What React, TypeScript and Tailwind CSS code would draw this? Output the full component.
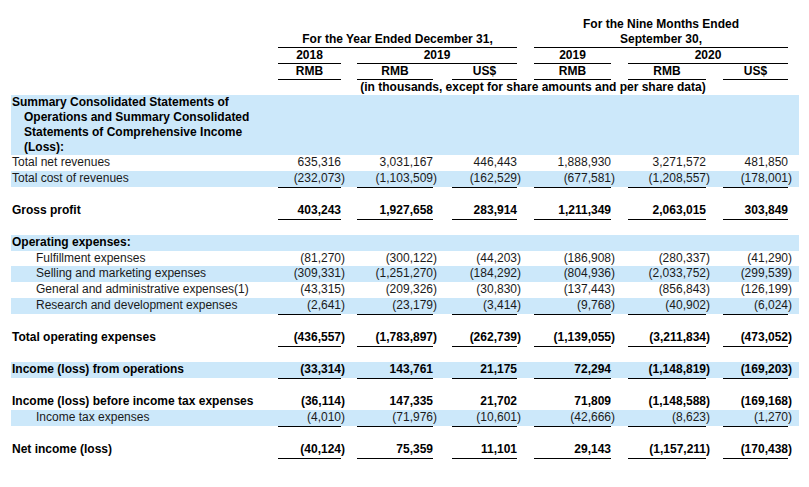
import React from "react";

const GRID =
  "grid grid-cols-[267px_63px_16px_76px_19px_65px_17px_77px_17px_78px_17px_65px_11px]";

type Row = {
  label: string;
  values?: string[];
  bold?: boolean;
  blue?: boolean;
  indent?: boolean;
  underline?: boolean;
  empty?: boolean;
  short?: boolean;
};

const rows: Row[] = [
  { label: "Total net revenues", values: ["635,316", "3,031,167", "446,443", "1,888,930", "3,271,572", "481,850"] },
  { label: "Total cost of revenues", blue: true, underline: true, values: ["(232,073)", "(1,103,509)", "(162,529)", "(677,581)", "(1,208,557)", "(178,001)"] },
  { label: "", empty: true },
  { label: "Gross profit", bold: true, underline: true, values: ["403,243", "1,927,658", "283,914", "1,211,349", "2,063,015", "303,849"] },
  { label: "", empty: true },
  { label: "Operating expenses:", bold: true, blue: true },
  { label: "Fulfillment expenses", indent: true, short: true, values: ["(81,270)", "(300,122)", "(44,203)", "(186,908)", "(280,337)", "(41,290)"] },
  { label: "Selling and marketing expenses", indent: true, blue: true, values: ["(309,331)", "(1,251,270)", "(184,292)", "(804,936)", "(2,033,752)", "(299,539)"] },
  { label: "General and administrative expenses(1)", indent: true, values: ["(43,315)", "(209,326)", "(30,830)", "(137,443)", "(856,843)", "(126,199)"] },
  { label: "Research and development expenses", indent: true, blue: true, underline: true, values: ["(2,641)", "(23,179)", "(3,414)", "(9,768)", "(40,902)", "(6,024)"] },
  { label: "", empty: true },
  { label: "Total operating expenses", bold: true, underline: true, values: ["(436,557)", "(1,783,897)", "(262,739)", "(1,139,055)", "(3,211,834)", "(473,052)"] },
  { label: "", empty: true },
  { label: "Income (loss) from operations", bold: true, blue: true, underline: true, values: ["(33,314)", "143,761", "21,175", "72,294", "(1,148,819)", "(169,203)"] },
  { label: "", empty: true },
  { label: "Income (loss) before income tax expenses", bold: true, values: ["(36,114)", "147,335", "21,702", "71,809", "(1,148,588)", "(169,168)"] },
  { label: "Income tax expenses", indent: true, blue: true, underline: true, values: ["(4,010)", "(71,976)", "(10,601)", "(42,666)", "(8,623)", "(1,270)"] },
  { label: "", empty: true },
  { label: "Net income (loss)", bold: true, underline: true, values: ["(40,124)", "75,359", "11,101", "29,143", "(1,157,211)", "(170,438)"] },
];

const colStarts = ["col-start-2", "col-start-4", "col-start-6", "col-start-8", "col-start-10", "col-start-12"];

function Num({ v, cls }: { v: string; cls: string }) {
  const neg = v.startsWith("(");
  return (
    <div className={`${cls} text-right whitespace-nowrap`}>
      <span className={neg ? "inline-block mr-[-4px]" : "inline-block"}>{v}</span>
    </div>
  );
}

export default function App() {
  return (
    <div
      className="w-[809px] h-[487px] bg-white text-[12px] text-[#1a1a1a] overflow-hidden"
      style={{ fontFamily: '"Liberation Sans", Arial, sans-serif' }}
    >
      <div className="ml-[11px] w-[788px] pt-[16px]">
        {/* Header */}
        <div className={`${GRID} h-[16px] leading-[17px] font-bold text-black`}>
          <div className="col-start-8 col-end-13 text-center">For the Nine Months Ended</div>
        </div>
        <div className={`${GRID} h-[16px] leading-[15px] font-bold text-black`}>
          <div className="col-start-2 col-end-7 text-center border-b border-black">For the Year Ended December 31,</div>
          <div className="col-start-8 col-end-13 text-center border-b border-black">September 30,</div>
        </div>
        <div className={`${GRID} h-[16px] leading-[15px] font-bold text-black`}>
          <div className="col-start-2 text-center border-b border-black">2018</div>
          <div className="col-start-4 col-end-7 text-center border-b border-black">2019</div>
          <div className="col-start-8 text-center border-b border-black">2019</div>
          <div className="col-start-10 col-end-13 text-center border-b border-black">2020</div>
        </div>
        <div className={`${GRID} h-[16px] leading-[15px] font-bold text-black`}>
          <div className="col-start-2 text-center border-b border-black">RMB</div>
          <div className="col-start-4 text-center border-b border-black">RMB</div>
          <div className="col-start-6 text-center border-b border-black">US$</div>
          <div className="col-start-8 text-center border-b border-black">RMB</div>
          <div className="col-start-10 text-center border-b border-black">RMB</div>
          <div className="col-start-12 text-center border-b border-black">US$</div>
        </div>
        <div className={`${GRID} h-[15px] leading-[15px] font-bold text-black`}>
          <div className="col-start-2 col-end-13 text-center whitespace-nowrap">
            (in thousands, except for share amounts and per share data)
          </div>
        </div>

        {/* Summary band */}
        <div className="h-[60px] bg-[#cce8fa] font-bold text-black leading-[15px] pl-[1px]">
          <div>Summary Consolidated Statements of</div>
          <div className="pl-[12px]">Operations and Summary Consolidated</div>
          <div className="pl-[12px]">Statements of Comprehensive Income</div>
          <div className="pl-[12px]">(Loss):</div>
        </div>

        {rows.map((r, i) => (
          <div
            key={i}
            className={`${GRID} ${r.short ? "h-[15px] grid-rows-[15px]" : "h-[16px] grid-rows-[16px]"} leading-[15px] ${
              r.blue ? "bg-[#cce8fa]" : ""
            } ${r.bold ? "font-bold text-black" : ""}`}
          >
            {!r.empty && (
              <div className={`col-start-1 row-start-1 whitespace-nowrap ${r.indent ? "pl-[25px]" : "pl-[1px]"}`}>
                {r.label}
              </div>
            )}
            {r.values &&
              r.values.map((v, j) => (
                <Num
                  key={j}
                  v={v}
                  cls={`${colStarts[j]} row-start-1 ${r.underline ? "h-[17px] border-b border-black" : ""}`}
                />
              ))}
          </div>
        ))}
      </div>
    </div>
  );
}
